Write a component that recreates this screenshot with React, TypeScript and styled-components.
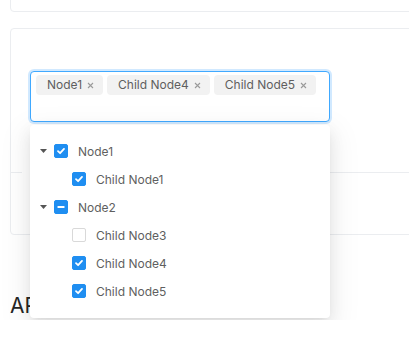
import React from "react";
import styled, { createGlobalStyle } from "styled-components";

const GlobalStyle = createGlobalStyle`
  html, body {
    margin: 0;
    padding: 0;
    background: #ffffff;
    overflow: hidden;
  }
  body {
    font-family: Inter, "Noto Sans", "Liberation Sans", sans-serif;
    -webkit-font-smoothing: antialiased;
  }
`;

const Page = styled.div`
  margin-top: -40px;
  padding-left: 10px;
  overflow: hidden;
`;

const Card = styled.section<{ $height?: number }>`
  position: relative;
  box-sizing: border-box;
  margin-right: -12px;
  border: 1px solid #ebedf0;
  border-radius: 4px;
  ${(p) => (p.$height ? `height: ${p.$height}px;` : "")}
  & + & {
    margin-top: 16px;
  }
`;

const Demo = styled.div`
  padding: 42px 24px 50px 19px;
`;

const SelectWrap = styled.div`
  position: relative;
  width: 300px;
`;

const SelectBox = styled.div`
  box-sizing: border-box;
  height: 51px;
  border: 1px solid #40a9ff;
  border-radius: 4px;
  box-shadow: 0 0 0 2px rgba(24, 144, 255, 0.2);
  padding: 3px 5px;
  display: flex;
  flex-direction: column;
  gap: 4px;
  background: #fff;
`;

const TagRow = styled.div`
  display: flex;
  gap: 4px;
`;

const Tag = styled.span`
  display: inline-flex;
  align-items: center;
  height: 20px;
  padding: 0 9px 0 11px;
  border-radius: 4px;
  background: #f2f2f2;
  color: #5f5f5f;
  font-size: 12px;
  line-height: 20px;
`;

const TagClose = styled.svg`
  margin-left: 5px;
  width: 7px;
  height: 7px;
`;

const SearchLine = styled.div`
  height: 19px;
`;

const Dropdown = styled.div`
  position: absolute;
  top: 54px;
  left: 0;
  width: 300px;
  box-sizing: border-box;
  padding: 12px 4px 13px 4px;
  background: #fff;
  border-radius: 4px;
  box-shadow: 0 3px 6px -4px rgba(0, 0, 0, 0.12),
    0 6px 16px 0 rgba(0, 0, 0, 0.08), 0 9px 28px 8px rgba(0, 0, 0, 0.05);
  z-index: 10;
`;

const Row = styled.div<{ $level: number }>`
  display: flex;
  align-items: center;
  height: 28px;
  padding-left: ${(p) => p.$level * 18}px;
`;

const Switcher = styled.span`
  width: 18px;
  height: 28px;
  display: flex;
  align-items: center;
  justify-content: center;
  flex-shrink: 0;
`;

const Box = styled.span<{ $on: boolean }>`
  box-sizing: border-box;
  margin-left: 2px;
  width: 14px;
  height: 14px;
  border-radius: 2px;
  display: flex;
  align-items: center;
  justify-content: center;
  flex-shrink: 0;
  background: ${(p) => (p.$on ? "#1f8ef1" : "#fff")};
  border: 1px solid ${(p) => (p.$on ? "#1f8ef1" : "#d9d9d9")};
`;

const Label = styled.span`
  margin-left: 10px;
  font-size: 12px;
  color: #5f5f5f;
  white-space: nowrap;
`;

const Meta = styled.div`
  position: relative;
  height: 61px;
  border-top: 1px solid #ebedf0;
`;

const MetaTitle = styled.span`
  position: absolute;
  top: -10px;
  left: 11px;
  padding: 1px 8px;
  background: #fff;
  font-size: 12px;
  color: #262626;
`;

const Heading = styled.h2`
  margin: 56px 0 0 0;
  font-size: 21px;
  line-height: 1.4;
  font-weight: 400;
  color: #262626;
`;

type State = "checked" | "half" | "none";

const Check = ({ state }: { state: State }) => (
  <Box $on={state !== "none"}>
    {state === "checked" && (
      <svg width="10" height="10" viewBox="0 0 10 10">
        <path
          d="M2 5.2 L4.1 7.2 L8 2.9"
          fill="none"
          stroke="#fff"
          strokeWidth="1.8"
          strokeLinecap="round"
          strokeLinejoin="round"
        />
      </svg>
    )}
    {state === "half" && (
      <svg width="10" height="10" viewBox="0 0 10 10">
        <rect x="1.5" y="4" width="7" height="2" fill="#fff" rx="0.5" />
      </svg>
    )}
  </Box>
);

const Caret = () => (
  <svg width="7" height="4" viewBox="0 0 7 4">
    <path d="M0 0 H7 L3.5 4 Z" fill="#555" />
  </svg>
);

const nodes: { label: string; level: number; state: State; parent: boolean }[] = [
  { label: "Node1", level: 0, state: "checked", parent: true },
  { label: "Child Node1", level: 1, state: "checked", parent: false },
  { label: "Node2", level: 0, state: "half", parent: true },
  { label: "Child Node3", level: 1, state: "none", parent: false },
  { label: "Child Node4", level: 1, state: "checked", parent: false },
  { label: "Child Node5", level: 1, state: "checked", parent: false },
];

const tags = ["Node1", "Child Node4", "Child Node5"];

export default function App() {
  return (
    <>
      <GlobalStyle />
      <Page>
        <Card $height={52} />
        <Card>
          <Demo>
            <SelectWrap>
              <SelectBox>
                <TagRow>
                  {tags.map((t) => (
                    <Tag key={t}>
                      {t}
                      <TagClose viewBox="0 0 7 7">
                        <path
                          d="M1 1 L6 6 M6 1 L1 6"
                          stroke="#9a9a9a"
                          strokeWidth="1.1"
                        />
                      </TagClose>
                    </Tag>
                  ))}
                </TagRow>
                <SearchLine />
              </SelectBox>
              <Dropdown>
                {nodes.map((n) => (
                  <Row key={n.label} $level={n.level}>
                    <Switcher>{n.parent && <Caret />}</Switcher>
                    <Check state={n.state} />
                    <Label>{n.label}</Label>
                  </Row>
                ))}
              </Dropdown>
            </SelectWrap>
          </Demo>
          <Meta>
            <MetaTitle>多选</MetaTitle>
          </Meta>
        </Card>
        <Heading>API</Heading>
      </Page>
    </>
  );
}
